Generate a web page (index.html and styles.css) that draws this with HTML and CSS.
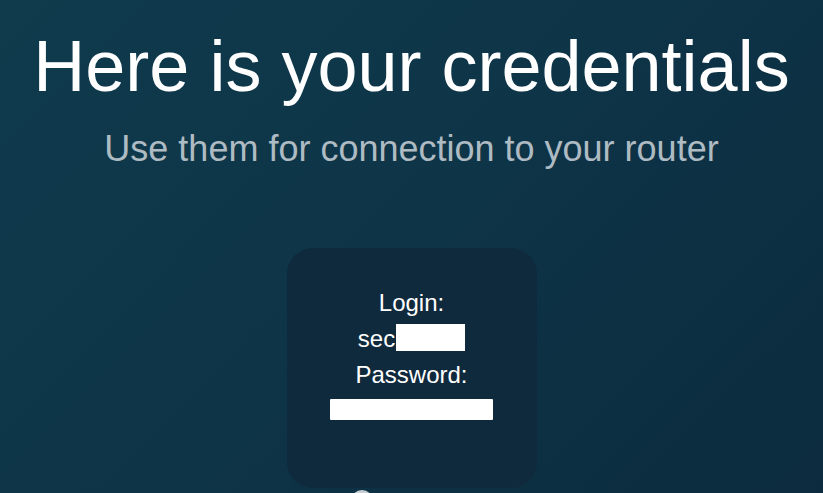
FILE: index.html
```html
<!DOCTYPE html>
<html lang="en">
<head>
  <meta charset="UTF-8">
  <title>Your credentials</title>
  <link rel="stylesheet" href="styles.css">
</head>
<body>
  <h1>Here is your credentials</h1>
  <p class="subtitle">Use them for connection to your router</p>

  <div class="card">
    <div class="label">Login:</div>
    <div class="value">sec<span class="hidden hidden-login"></span></div>
    <div class="label">Password:</div>
    <div class="value"><span class="hidden hidden-pass"></span></div>
  </div>

  <div class="dot"></div>
</body>
</html>
```

FILE: styles.css
```css
html, body {
  height: 100%;
}

body {
  margin: 0;
  padding-top: 23px;
  box-sizing: border-box;
  font-family: 'Liberation Sans', Arial, sans-serif;
  background: linear-gradient(135deg, #0f3b4d 0%, #0e3447 50%, #0c2b3e 100%);
  color: #fff;
  text-align: center;
  overflow: hidden;
}

h1 {
  margin: 0;
  font-size: 72px;
  font-weight: normal;
  line-height: 1.2;
}

.subtitle {
  margin: 18px 0 0;
  font-size: 36px;
  line-height: 1.2;
  color: #aebbc3;
}

.card {
  width: 250px;
  height: 240px;
  box-sizing: border-box;
  margin: 77px auto 0;
  padding-top: 37px;
  background: #102a3d;
  border-radius: 26px;
  font-size: 24px;
  line-height: 36px;
}

.hidden {
  display: inline-block;
  background: #fff;
}

.hidden-login {
  width: 69px;
  height: 27px;
  margin-left: 1px;
  vertical-align: -4px;
}

.hidden-pass {
  width: 163px;
  height: 21px;
  vertical-align: -1px;
  border-radius: 1px;
}

.dot {
  width: 22px;
  height: 22px;
  margin: 2px auto 0;
  position: relative;
  left: -50px;
  border-radius: 50%;
  background: #c9d0d4;
}
```
